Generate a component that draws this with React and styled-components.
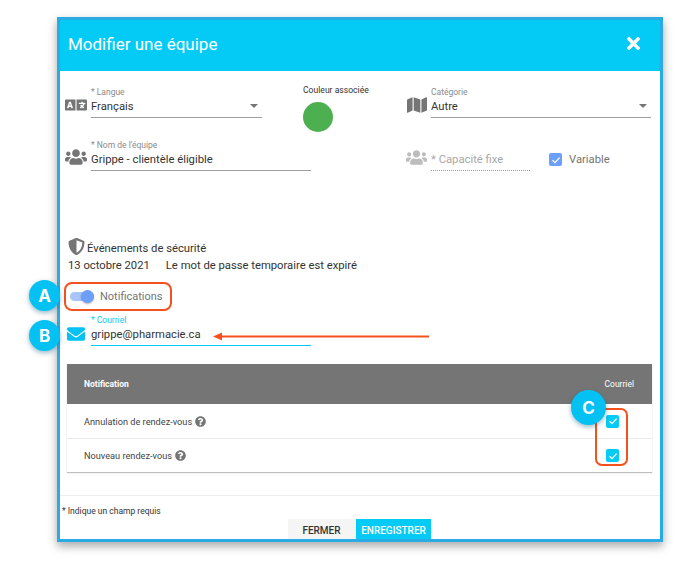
import React from 'react';
import styled, { createGlobalStyle } from 'styled-components';
import { FaLanguage, FaUsers, FaMap, FaShieldAlt, FaEnvelope, FaQuestionCircle, FaTimes } from 'react-icons/fa';

const GlobalStyle = createGlobalStyle`
  html, body { margin: 0; padding: 0; background: #fff; }
  body { font-family: Roboto, "Liberation Sans", sans-serif; color: #333; }
`;

const Page = styled.div`
  position: relative;
  width: 681px;
  height: 562px;
  padding: 17px 0 0 57px;
  box-sizing: border-box;
  overflow: hidden;
`;

const Modal = styled.div`
  width: 606px;
  height: 525px;
  box-sizing: border-box;
  border: 3px solid #2aabe4;
  background: #fff;
  box-shadow: 0 4px 9px rgba(0, 0, 0, 0.35);
  display: flex;
  flex-direction: column;
  overflow: hidden;
`;

const Header = styled.div`
  height: 51px;
  flex: none;
  box-sizing: border-box;
  background: #03cbf5;
  color: #fff;
  display: flex;
  align-items: center;
  justify-content: space-between;
  padding: 0 17px 4px 8px;
  font-size: 17px;
`;

const Body = styled.div`
  flex: 1;
  padding: 14px 0 0 5px;
`;

const FormRow = styled.div`
  display: flex;
  align-items: flex-start;
  height: 33px;
  margin-top: ${p => p.$mt || 0}px;
  margin-bottom: ${p => p.$mb || 0}px;
`;

const IconSlot = styled.div`
  width: ${p => p.$w || 22}px;
  height: 33px;
  flex: none;
  margin-right: 4px;
  display: flex;
  align-items: flex-end;
  justify-content: center;
  padding-bottom: ${p => p.$pb || 4}px;
  box-sizing: border-box;
  color: ${p => p.$color || '#757575'};
`;

const Field = styled.div`
  width: ${p => p.$w}px;
  height: 33px;
  box-sizing: border-box;
  flex: none;
  position: relative;
  border-bottom: 1px ${p => (p.$dotted ? 'dotted' : 'solid')} ${p => p.$line || '#9e9e9e'};
`;

const FieldLabel = styled.div`
  font-size: 8.5px;
  line-height: 14px;
  height: 14px;
  color: ${p => p.$color || '#8a8a8a'};
`;

const FieldValue = styled.div`
  font-size: 11.25px;
  line-height: 16px;
  color: ${p => p.$color || '#333'};
`;

const Caret = styled.span`
  position: absolute;
  right: 4px;
  top: 19px;
  border-left: 4px solid transparent;
  border-right: 4px solid transparent;
  border-top: 4px solid #757575;
`;

const ColorCol = styled.div`
  width: 104px;
  margin-left: 41px;
  flex: none;
`;

const ColorLabel = styled.div`
  font-size: 8.6px;
  line-height: 11px;
  color: #333;
  margin-bottom: 6px;
`;

const ColorDot = styled.div`
  width: 30px;
  height: 30px;
  border-radius: 50%;
  background: #4caf50;
`;

const Spacer = styled.div`
  width: ${p => p.$w}px;
  flex: none;
`;

const CheckBox = styled.span`
  width: 13px;
  height: 13px;
  flex: none;
  border-radius: 2px;
  background: ${p => p.$color};
  display: inline-flex;
  align-items: center;
  justify-content: center;
`;

const Check = ({ color }) => (
  <CheckBox $color={color}>
    <svg width="10" height="10" viewBox="0 0 10 10">
      <path d="M1.5 5.2 L4 7.6 L8.6 2.6" fill="none" stroke="#fff" strokeWidth="1.3" />
    </svg>
  </CheckBox>
);

const VariableWrap = styled.div`
  display: flex;
  align-items: center;
  gap: 7px;
  margin: 15px 0 0 19px;
  font-size: 11.25px;
  line-height: 13px;
  color: #757575;
`;

const Security = styled.div`
  margin: 68px 0 0 3px;
  font-size: 11.25px;
  color: #333;
`;

const SecurityTitle = styled.div`
  display: flex;
  align-items: center;
  gap: 2px;
  height: 18px;
`;

const ShieldIcon = styled(FaShieldAlt)`
  color: #757575;
  margin-bottom: 4px;
`;

const SecurityEvent = styled.div`
  display: flex;
  gap: 16px;
  height: 16px;
  margin-top: 1px;
  line-height: 16px;
`;

const Highlight = styled.div`
  display: flex;
  align-items: center;
  gap: 6px;
  width: 108px;
  height: 29px;
  box-sizing: border-box;
  margin: 8px 0 0 -4px;
  padding-left: 4px;
  border: 2px solid #f4511e;
  border-radius: 8px;
  font-size: 11px;
  color: #757575;
`;

const Toggle = styled.span`
  position: relative;
  width: 24px;
  height: 9px;
  border-radius: 5px;
  background: #a9c4fb;
`;

const Knob = styled.span`
  position: absolute;
  right: 0;
  top: -2px;
  width: 13px;
  height: 13px;
  border-radius: 50%;
  background: #6c9ffa;
  box-shadow: 0 1px 2px rgba(0, 0, 0, 0.3);
`;

const Table = styled.div`
  margin: 18px 8px 0 2px;
  box-shadow: 0 1px 1px rgba(0, 0, 0, 0.25);
`;

const TableHead = styled.div`
  height: 40px;
  background: #757575;
  color: #fff;
  display: flex;
  align-items: center;
  justify-content: space-between;
  padding: 0 18px 0 17px;
  font-size: 8.5px;
`;

const HeadCell = styled.span`
  font-weight: ${p => (p.$bold ? 700 : 400)};
`;

const TableRow = styled.div`
  height: 34px;
  box-sizing: border-box;
  display: flex;
  align-items: center;
  justify-content: space-between;
  padding: 0 33px 0 17px;
  font-size: 9.2px;
  & + & { border-top: 1px solid #e9e9e9; }
`;

const RowLabel = styled.span`
  display: flex;
  align-items: center;
  gap: 3px;
  color: #757575;
  & > span { color: #444; }
`;

const Footer = styled.div`
  flex: none;
  border-top: 1px solid #eee;
  height: 44px;
  box-sizing: border-box;
  padding: 10px 0 0 2px;
  font-size: 8.5px;
  line-height: 11px;
  color: #333;
`;

const Buttons = styled.div`
  display: flex;
  justify-content: center;
  gap: 1px;
  margin-top: 2px;
  padding-right: 3px;
`;

const Button = styled.div`
  height: 22px;
  width: ${p => p.$w}px;
  display: flex;
  align-items: center;
  justify-content: center;
  background: ${p => (p.$primary ? '#03cbf5' : '#f5f5f5')};
  color: ${p => (p.$primary ? '#fff' : '#333')};
  font-size: 10px;
  font-weight: 500;
`;

const Callout = styled.div`
  position: absolute;
  left: ${p => p.$x}px;
  top: ${p => p.$y}px;
  width: ${p => p.$size}px;
  height: ${p => p.$size}px;
  border-radius: 50%;
  background: #03c1f3;
  color: #fff;
  font-family: Inter, Roboto, sans-serif;
  font-weight: 700;
  font-size: 17px;
  display: flex;
  align-items: center;
  justify-content: center;
  box-shadow: 0 2px 5px rgba(0, 80, 120, 0.4);
`;

const CheckOutline = styled.div`
  position: absolute;
  left: 595px;
  top: 408px;
  width: 33px;
  height: 58px;
  box-sizing: border-box;
  border: 2px solid #f4511e;
  border-radius: 7px;
`;

const Arrow = styled.svg`
  position: absolute;
  left: 212px;
  top: 331px;
`;

const App = () => (
  <>
    <GlobalStyle />
    <Page>
      <Modal>
        <Header>
          Modifier une équipe
          <FaTimes size={19} />
        </Header>
        <Body>
          <FormRow $mb={20}>
            <IconSlot $pb={2}><FaLanguage size={22} /></IconSlot>
            <Field $w={171}>
              <FieldLabel>* Langue</FieldLabel>
              <FieldValue>Français</FieldValue>
              <Caret />
            </Field>
            <ColorCol>
              <ColorLabel>Couleur associée</ColorLabel>
              <ColorDot />
            </ColorCol>
            <IconSlot $w={20} $pb={3}><FaMap size={20} /></IconSlot>
            <Field $w={220}>
              <FieldLabel>Catégorie</FieldLabel>
              <FieldValue>Autre</FieldValue>
              <Caret />
            </Field>
          </FormRow>
          <FormRow>
            <IconSlot $pb={3}><FaUsers size={22} /></IconSlot>
            <Field $w={220}>
              <FieldLabel>* Nom de l'équipe</FieldLabel>
              <FieldValue>Grippe - clientèle éligible</FieldValue>
            </Field>
            <Spacer $w={95} />
            <IconSlot $w={21} $color="#bdbdbd" $pb={3}><FaUsers size={21} /></IconSlot>
            <Field $w={99} $dotted>
              <FieldLabel />
              <FieldValue $color="#a8a8a8">* Capacité fixe</FieldValue>
            </Field>
            <VariableWrap>
              <Check color="#6c9ffa" />
              Variable
            </VariableWrap>
          </FormRow>
          <Security>
            <SecurityTitle>
              <ShieldIcon size={17} />
              Événements de sécurité
            </SecurityTitle>
            <SecurityEvent>
              <span>13 octobre 2021</span>
              <span>Le mot de passe temporaire est expiré</span>
            </SecurityEvent>
            <Highlight>
              <Toggle><Knob /></Toggle>
              Notifications
            </Highlight>
          </Security>
          <FormRow $mt={2}>
            <IconSlot $color="#03c1f3" $pb={3}><FaEnvelope size={18} /></IconSlot>
            <Field $w={220} $line="#03cbf5">
              <FieldLabel $color="#03cbf5">* Courriel</FieldLabel>
              <FieldValue>grippe@pharmacie.ca</FieldValue>
            </Field>
          </FormRow>
          <Table>
            <TableHead>
              <HeadCell $bold>Notification</HeadCell>
              <HeadCell>Courriel</HeadCell>
            </TableHead>
            <TableRow>
              <RowLabel><span>Annulation de rendez-vous</span><FaQuestionCircle size={11} /></RowLabel>
              <Check color="#03cbf5" />
            </TableRow>
            <TableRow>
              <RowLabel><span>Nouveau rendez-vous</span><FaQuestionCircle size={11} /></RowLabel>
              <Check color="#03cbf5" />
            </TableRow>
          </Table>
        </Body>
        <Footer>
          * Indique un champ requis
          <Buttons>
            <Button $w={67}>FERMER</Button>
            <Button $w={75} $primary>ENREGISTRER</Button>
          </Buttons>
        </Footer>
      </Modal>
      <CheckOutline />
      <Callout $x={29} $y={280} $size={31}>A</Callout>
      <Callout $x={29} $y={320} $size={31}>B</Callout>
      <Callout $x={571} $y={390} $size={35}>C</Callout>
      <Arrow width="220" height="10" viewBox="0 0 220 10">
        <path d="M8 5.5 H217" stroke="#f4511e" strokeWidth="2" />
        <path d="M1 5.5 L10 1.5 V9.5 Z" fill="#f4511e" />
      </Arrow>
    </Page>
  </>
);

export default App;
